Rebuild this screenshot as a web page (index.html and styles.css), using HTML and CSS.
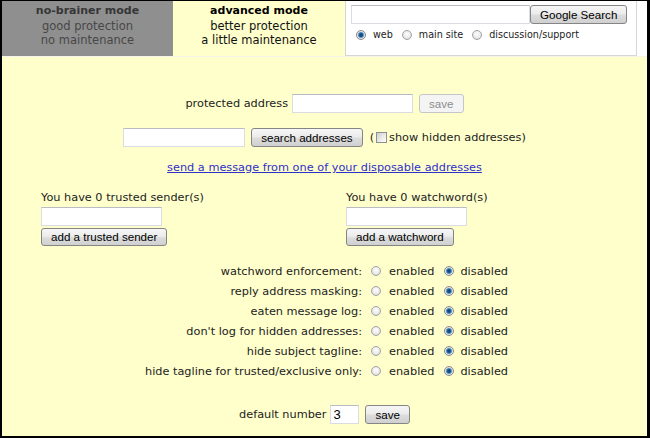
FILE: index.html
```html
<!DOCTYPE html>
<html>
<head>
<meta charset="utf-8">
<link rel="stylesheet" href="styles.css">
</head>
<body>
<div class="page">
  <div class="header">
    <div class="tab tab-off">
      <b class="tab-title">no-brainer mode</b>
      <span>good protection</span>
      <span>no maintenance</span>
    </div>
    <div class="tab tab-on">
      <b class="tab-title">advanced mode</b>
      <span>better protection</span>
      <span>a little maintenance</span>
    </div>
    <div class="search-box">
      <div class="search-row">
        <input class="field search-field" type="text">
        <button class="btn btn-google">Google Search</button>
      </div>
      <div class="scope-row">
        <label class="scope"><input class="radio" type="radio" name="scope" checked><span>web</span></label>
        <label class="scope"><input class="radio" type="radio" name="scope"><span>main site</span></label>
        <label class="scope"><input class="radio" type="radio" name="scope"><span>discussion/support</span></label>
      </div>
    </div>
    <div class="header-fill"></div>
  </div>

  <div class="content">
    <div class="row">
      <span class="label">protected address</span>
      <input class="field field-addr" type="text">
      <button class="btn btn-disabled" disabled>save</button>
    </div>

    <div class="row row-search">
      <input class="field field-search" type="text">
      <button class="btn">search addresses</button>
      <span class="paren">(</span>
      <input class="check" type="checkbox">
      <span class="check-label">show hidden addresses)</span>
    </div>

    <a class="send-link" href="#">send a message from one of your disposable addresses</a>

    <div class="columns">
      <div class="col">
        <div class="lead">You have 0 trusted sender(s)</div>
        <input class="field field-col" type="text">
        <button class="btn btn-col">add a trusted sender</button>
      </div>
      <div class="col">
        <div class="lead">You have 0 watchword(s)</div>
        <input class="field field-col" type="text">
        <button class="btn btn-col">add a watchword</button>
      </div>
    </div>

    <div class="settings">
      <span class="set-label">watchword enforcement:</span>
      <label class="opt"><input class="radio" type="radio" name="s1"><span>enabled</span></label>
      <label class="opt opt2"><input class="radio" type="radio" name="s1" checked><span>disabled</span></label>

      <span class="set-label">reply address masking:</span>
      <label class="opt"><input class="radio" type="radio" name="s2"><span>enabled</span></label>
      <label class="opt opt2"><input class="radio" type="radio" name="s2" checked><span>disabled</span></label>

      <span class="set-label">eaten message log:</span>
      <label class="opt"><input class="radio" type="radio" name="s3"><span>enabled</span></label>
      <label class="opt opt2"><input class="radio" type="radio" name="s3" checked><span>disabled</span></label>

      <span class="set-label">don't log for hidden addresses:</span>
      <label class="opt"><input class="radio" type="radio" name="s4"><span>enabled</span></label>
      <label class="opt opt2"><input class="radio" type="radio" name="s4" checked><span>disabled</span></label>

      <span class="set-label">hide subject tagline:</span>
      <label class="opt"><input class="radio" type="radio" name="s5"><span>enabled</span></label>
      <label class="opt opt2"><input class="radio" type="radio" name="s5" checked><span>disabled</span></label>

      <span class="set-label">hide tagline for trusted/exclusive only:</span>
      <label class="opt"><input class="radio" type="radio" name="s6"><span>enabled</span></label>
      <label class="opt opt2"><input class="radio" type="radio" name="s6" checked><span>disabled</span></label>
    </div>

    <div class="row row-default">
      <span class="label">default number</span>
      <input class="field field-num" type="text" value="3">
      <button class="btn">save</button>
    </div>
  </div>
</div>
</body>
</html>
```

FILE: styles.css
```css
* { box-sizing: border-box; }

html, body {
  margin: 0;
  padding: 0;
  background: #000;
}

.page {
  width: 650px;
  height: 438px;
  border-style: solid;
  border-color: #000;
  border-width: 1px 3px 2px 2px;
  background: #ffffcc;
  display: flex;
  flex-direction: column;
  font-family: "DejaVu Sans", Verdana, sans-serif;
  font-size: 11.3px;
  color: #222;
  overflow: hidden;
}

/* ---------- header ---------- */
.header {
  display: flex;
  height: 56px;
  flex: none;
  background: #ffffff;
  border-bottom: 1px solid #f4f4ea;
}

.tab {
  display: flex;
  flex-direction: column;
  align-items: center;
  padding-top: 3px;
  line-height: 14.5px;
  height: 55px;
  font-size: 11.5px;
}

.tab-title { font-size: 11px; }

.tab-off {
  width: 171px;
  background: #8f8f8f;
  color: #474747;
}
.tab-off .tab-title { color: #363636; }

.tab-on {
  width: 172px;
  background: #ffffcc;
  color: #111;
}
.tab-on .tab-title { color: #000; }

.search-box {
  width: 292px;
  height: 55px;
  border: 1px solid #d6d6d6;
  border-top: none;
  background: #fff;
  padding: 3px 0 0 5px;
}

.search-row {
  display: flex;
  align-items: center;
  height: 20px;
}

.search-field {
  width: 179px;
  height: 18px;
}

.btn-google {
  margin-left: 6px;
  height: 20px;
  width: 97px;
  padding: 0;
  font-size: 11.8px;
}

.scope-row {
  display: flex;
  align-items: center;
  margin-top: 4px;
  padding-left: 5px;
  height: 13px;
  font-size: 9.6px;
  color: #222;
}

.scope {
  display: flex;
  align-items: center;
  margin-right: 9px;
}
.scope span { margin-left: 7px; }

.header-fill { flex: 1; background: #fff; }

/* ---------- controls ---------- */
.field {
  height: 19px;
  border: 1px solid #d9dde2;
  border-top-color: #b9bcc2;
  background: #fff;
  padding: 0 2px;
  margin: 0;
  font-family: "Liberation Sans", Arial, sans-serif;
  font-size: 13px;
  color: #000;
  outline: none;
}

.btn {
  height: 19px;
  margin: 0;
  padding: 0 9px;
  border: 1px solid #858585;
  border-radius: 3px;
  background: linear-gradient(#f6f6f6, #ececec 45%, #dcdcdc 55%, #d0d0d0);
  font-family: "Liberation Sans", Arial, sans-serif;
  font-size: 11.6px;
  color: #000;
  line-height: 17px;
  white-space: nowrap;
}

.btn-disabled {
  border-color: #c4c6c8;
  background: #f4f4f4;
  color: #8c8c8c;
}

.radio {
  -webkit-appearance: none;
  appearance: none;
  width: 10px;
  height: 10px;
  margin: 0;
  border-radius: 50%;
  border: 1px solid #a3a3a3;
  background: radial-gradient(circle at 50% 40%, #ffffff 0, #ececec 50%, #d2d2d2 100%);
  flex: none;
}
.radio:checked {
  border-color: #8a8a8a;
  background: radial-gradient(circle, #0e3f6a 0, #1f5d94 1.8px, #6fa4cf 2.8px, #e4e4e4 3.4px, #d6d6d6 100%);
}

.check {
  -webkit-appearance: none;
  appearance: none;
  width: 11px;
  height: 11px;
  margin: 0 2px 0 0;
  border: 1px solid #8e8f8f;
  background: linear-gradient(135deg, #cfcfcf, #f2f2f2 70%, #fff);
}

/* ---------- content ---------- */
.content {
  flex: 1;
  display: flex;
  flex-direction: column;
  align-items: center;
  padding-top: 37px;
}

.row {
  display: flex;
  align-items: center;
  height: 19px;
}

.label { margin-right: 4px; }

.field-addr { width: 121px; }
.row .btn { margin-left: 6px; }

.row-search { margin-top: 15px; }
.field-search { width: 122px; }
.paren { margin-left: 7px; margin-right: 2px; }
.check-label { margin-left: 0; }

.send-link {
  margin-top: 14px;
  line-height: 14px;
  color: #3030c8;
  text-decoration: underline;
}

.columns {
  align-self: stretch;
  display: grid;
  grid-template-columns: 305px 1fr;
  padding-left: 39px;
  margin-top: 16px;
}

.col {
  display: flex;
  flex-direction: column;
  align-items: flex-start;
}

.lead { line-height: 14px; }

.field-col {
  width: 121px;
  margin-top: 2px;
}

.btn-col {
  margin-top: 2px;
  height: 18px;
  line-height: 16px;
}

.settings {
  display: grid;
  grid-template-columns: auto auto auto;
  grid-auto-rows: 20px;
  align-items: center;
  margin-top: 15px;
  margin-left: 4px;
}

.set-label {
  text-align: right;
  margin-right: 9px;
}

.opt {
  display: flex;
  align-items: center;
}
.opt span { margin-left: 8px; }
.opt2 { margin-left: 10px; }
.opt2 span { margin-left: 6px; }

.row-default { margin-top: 24px; }
.field-num { width: 29px; }
```
